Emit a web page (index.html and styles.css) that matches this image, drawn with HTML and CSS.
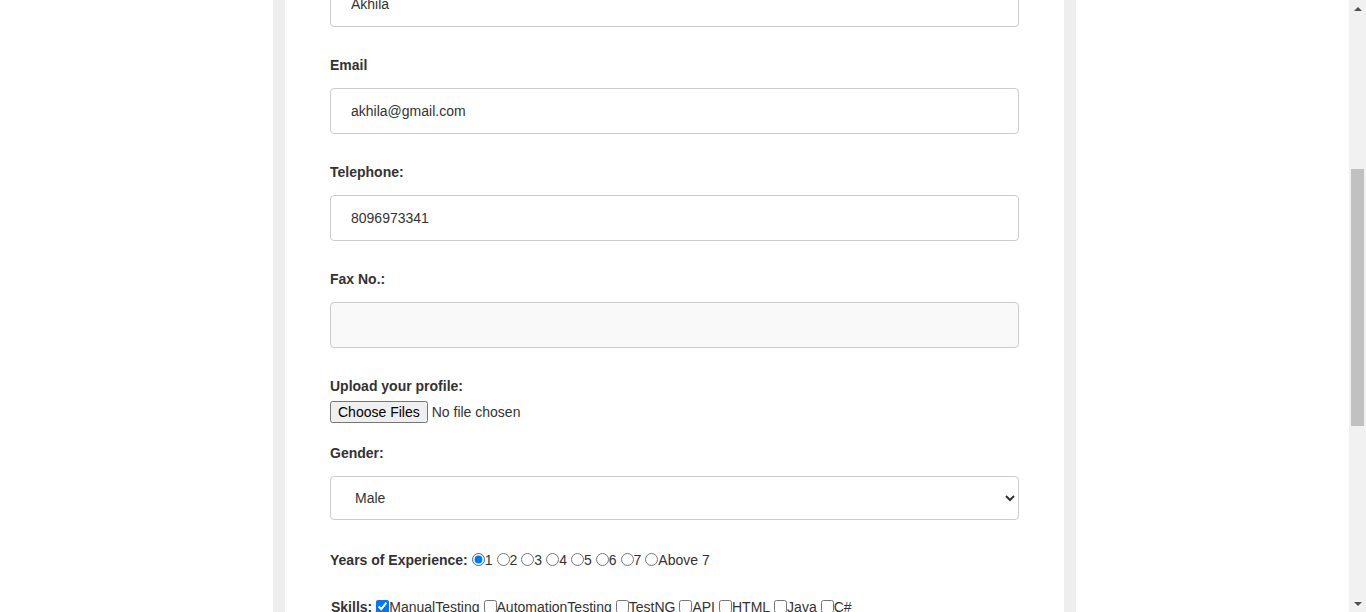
FILE: index.html
```html
<!DOCTYPE html>
<html>
<head>
<meta charset="utf-8">
<title>Registration</title>
<link rel="stylesheet" href="styles.css">
</head>
<body>
<div class="viewport">
  <main class="page">
    <form class="card">
      <div class="group first">
        <input class="field" type="text" value="Akhila">
      </div>
      <div class="group">
        <label class="lbl">Email</label>
        <input class="field" type="text" value="akhila@gmail.com">
      </div>
      <div class="group">
        <label class="lbl">Telephone:</label>
        <input class="field" type="text" value="8096973341">
      </div>
      <div class="group">
        <label class="lbl">Fax No.:</label>
        <input class="field fax" type="text" value="">
      </div>
      <div class="group upload">
        <label class="lbl tight">Upload your profile:</label>
        <input class="file" type="file" multiple>
      </div>
      <div class="group">
        <label class="lbl">Gender:</label>
        <select class="field select">
          <option>Male</option>
          <option>Female</option>
        </select>
      </div>
      <div class="line years"><b>Years of Experience:</b><input type="radio" name="exp" checked>1<input type="radio" name="exp">2<input type="radio" name="exp">3<input type="radio" name="exp">4<input type="radio" name="exp">5<input type="radio" name="exp">6<input type="radio" name="exp">7<input type="radio" name="exp">Above 7</div>
      <div class="line skills"><b>Skills:</b><input type="checkbox" checked>ManualTesting<input type="checkbox">AutomationTesting<input type="checkbox">TestNG<input type="checkbox">API<input type="checkbox">HTML<input type="checkbox">Java<input type="checkbox">C#</div>
    </form>
  </main>
  <div class="scrollbar">
    <div class="sb-btn"><span class="tri up"></span></div>
    <div class="sb-track"><div class="sb-thumb"></div></div>
    <div class="sb-btn"><span class="tri down"></span></div>
  </div>
</div>
</body>
</html>
```
FILE: styles.css
```css
html, body {
  margin: 0;
  padding: 0;
  height: 612px;
  overflow: hidden;
  background: #fff;
}
body {
  font-family: "Liberation Sans", Arial, sans-serif;
  font-size: 14px;
  color: #333;
}
.viewport {
  display: flex;
  height: 612px;
}
.page {
  flex: 1;
  display: flex;
  justify-content: center;
  overflow: hidden;
}
.card {
  width: 689px;
  border-left: 12px solid #eee;
  border-right: 12px solid #eee;
  padding: 0 45px;
  box-sizing: content-box;
  background: #fff;
  margin: 0;
}
.group {
  display: flex;
  flex-direction: column;
  margin-bottom: 28px;
}
.group.first {
  margin-top: -19px;
}
.lbl {
  font-weight: bold;
  line-height: 20px;
  margin-bottom: 13px;
}
.lbl.tight {
  margin-bottom: 5px;
}
.field {
  box-sizing: border-box;
  width: 689px;
  height: 46px;
  border: 1px solid #ccc;
  border-radius: 4px;
  padding: 0 20px;
  font-family: "Liberation Sans", Arial, sans-serif;
  font-size: 14px;
  color: #333;
  background: #fff;
  outline: none;
}
.field.fax {
  background: #f9f9f9;
}
.select {
  height: 44px;
  padding-left: 20px;
  padding-right: 6px;
}
.upload {
  margin-bottom: 20px;
}
.file {
  font-family: "Liberation Sans", Arial, sans-serif;
  font-size: 14px;
  color: #333;
  height: 22px;
}
.line {
  line-height: 20px;
  white-space: nowrap;
}
.line b {
  font-weight: bold;
}
.years {
  margin-top: 30px;
}
.skills {
  margin-top: 27px;
}
.skills b {
  margin-left: 1px;
}
.line input {
  margin: 3px 0 0 4px;
  vertical-align: top;
}
.scrollbar {
  width: 17px;
  background: #f1f1f1;
  display: flex;
  flex-direction: column;
}
.sb-btn {
  height: 17px;
  display: flex;
  align-items: center;
  justify-content: center;
}
.tri {
  width: 0;
  height: 0;
  border-left: 4px solid transparent;
  border-right: 4px solid transparent;
}
.tri.up {
  border-bottom: 4px solid #505050;
}
.tri.down {
  border-top: 4px solid #505050;
}
.sb-track {
  flex: 1;
  display: flex;
  flex-direction: column;
  align-items: center;
}
.sb-thumb {
  width: 13px;
  height: 257px;
  margin-top: 152px;
  background: #c1c1c1;
}
```
